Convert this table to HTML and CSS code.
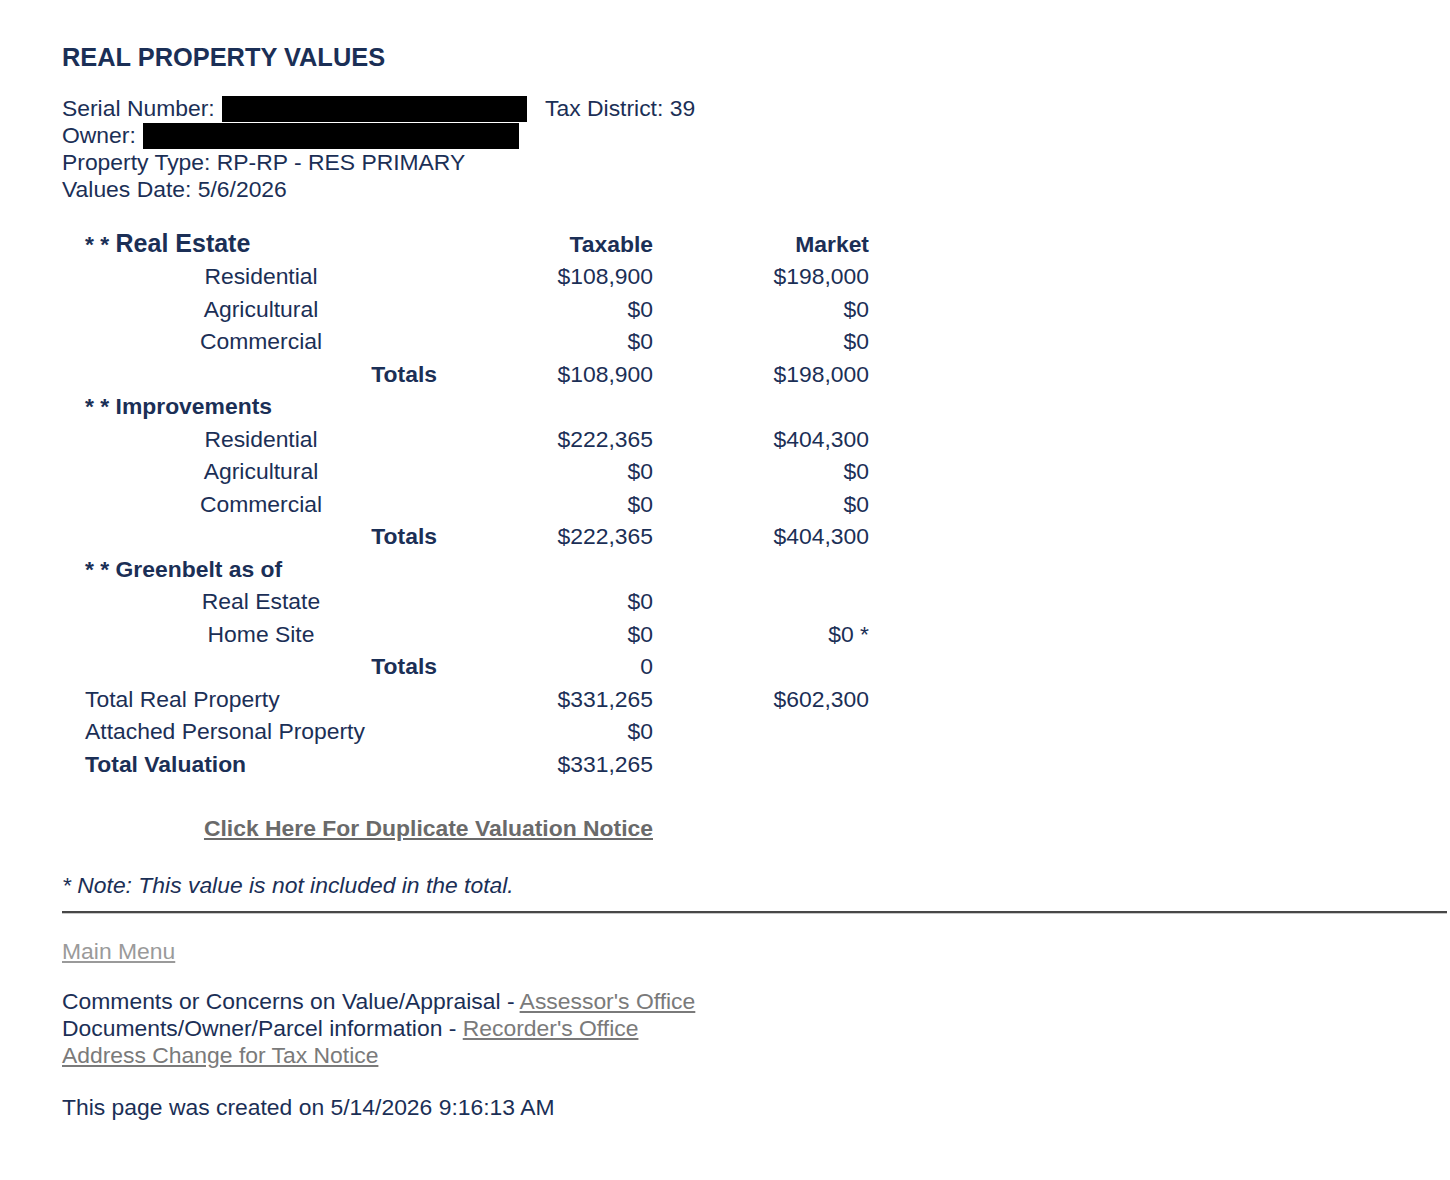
FILE: index.html
```html
<!DOCTYPE html>
<html lang="en">
<head>
<meta charset="utf-8">
<title>Real Property Values</title>
<link rel="stylesheet" href="styles.css">
</head>
<body>
<main class="page">
  <h1 class="title">REAL PROPERTY VALUES</h1>

  <div class="info">
    <div class="info-row">Serial Number: <span class="redact redact-serial"></span><span class="district">Tax District: 39</span></div>
    <div class="info-row">Owner: <span class="redact redact-owner"></span></div>
    <div class="info-row">Property Type: RP-RP - RES PRIMARY</div>
    <div class="info-row">Values Date: 5/6/2026</div>
  </div>

  <div class="values">
    <div class="cell section">* * <span class="section-big">Real Estate</span></div>
    <div class="cell num head">Taxable</div>
    <div class="cell num head">Market</div>

    <div class="cell sub">Residential</div>
    <div class="cell num">$108,900</div>
    <div class="cell num">$198,000</div>

    <div class="cell sub">Agricultural</div>
    <div class="cell num">$0</div>
    <div class="cell num">$0</div>

    <div class="cell sub">Commercial</div>
    <div class="cell num">$0</div>
    <div class="cell num">$0</div>

    <div class="cell totals">Totals</div>
    <div class="cell num">$108,900</div>
    <div class="cell num">$198,000</div>

    <div class="cell section full">* * Improvements</div>

    <div class="cell sub">Residential</div>
    <div class="cell num">$222,365</div>
    <div class="cell num">$404,300</div>

    <div class="cell sub">Agricultural</div>
    <div class="cell num">$0</div>
    <div class="cell num">$0</div>

    <div class="cell sub">Commercial</div>
    <div class="cell num">$0</div>
    <div class="cell num">$0</div>

    <div class="cell totals">Totals</div>
    <div class="cell num">$222,365</div>
    <div class="cell num">$404,300</div>

    <div class="cell section full">* * Greenbelt as of</div>

    <div class="cell sub">Real Estate</div>
    <div class="cell num">$0</div>
    <div class="cell num"></div>

    <div class="cell sub">Home Site</div>
    <div class="cell num">$0</div>
    <div class="cell num">$0 *</div>

    <div class="cell totals">Totals</div>
    <div class="cell num">0</div>
    <div class="cell num"></div>

    <div class="cell">Total Real Property</div>
    <div class="cell num">$331,265</div>
    <div class="cell num">$602,300</div>

    <div class="cell">Attached Personal Property</div>
    <div class="cell num">$0</div>
    <div class="cell num"></div>

    <div class="cell strong">Total Valuation</div>
    <div class="cell num">$331,265</div>
    <div class="cell num"></div>
  </div>

  <div class="dup-row"><a class="dup-link" href="#">Click Here For Duplicate Valuation Notice</a></div>

  <p class="note">* Note: This value is not included in the total.</p>

  <hr class="rule">

  <a class="main-menu" href="#">Main Menu</a>

  <div class="contacts">
    <div>Comments or Concerns on Value/Appraisal - <a class="office-link" href="#">Assessor's Office</a></div>
    <div>Documents/Owner/Parcel information - <a class="office-link" href="#">Recorder's Office</a></div>
    <div><a class="office-link" href="#">Address Change for Tax Notice</a></div>
  </div>

  <p class="created">This page was created on 5/14/2026 9:16:13 AM</p>
</main>
</body>
</html>
```

FILE: styles.css
```css
html, body {
  margin: 0;
  padding: 0;
  background: #ffffff;
}

body {
  font-family: "Liberation Sans", Arial, Helvetica, sans-serif;
  color: #1b2f56;
  font-size: 22.9px;
}

.page {
  padding: 39px 3px 40px 62px;
}

.title {
  margin: 0;
  font-size: 25.4px;
  font-weight: bold;
  line-height: 36px;
  color: #1b2f56;
}

.info {
  margin-top: 20px;
  line-height: 27px;
}

.info-row {
  white-space: nowrap;
}

.redact {
  display: inline-block;
  background: #000;
  height: 26px;
  vertical-align: -6px;
}

.redact-serial {
  width: 305px;
  margin-left: 1px;
}

.redact-owner {
  width: 376px;
  margin-left: 1px;
}

.district {
  margin-left: 18px;
}

.values {
  display: grid;
  grid-template-columns: 352px 216px 216px;
  grid-auto-rows: 32.5px;
  align-items: center;
  margin-left: 23px;
  margin-top: 25px;
  width: 784px;
}

.cell {
  white-space: nowrap;
  line-height: 27px;
}

.num {
  text-align: right;
}

.head {
  font-weight: bold;
}

.section {
  font-weight: bold;
}

.section.full {
  grid-column: 1 / -1;
}

.section-big {
  font-size: 25px;
}

.sub {
  text-align: center;
}

.totals {
  text-align: right;
  font-weight: bold;
}

.strong {
  font-weight: bold;
}

.dup-row {
  margin-left: 23px;
  width: 568px;
  text-align: right;
  margin-top: 34px;
  line-height: 27px;
}

.dup-link {
  color: #6a6a6a;
  font-weight: bold;
  text-decoration: underline;
}

.note {
  margin: 30px 0 0 0;
  font-style: italic;
  line-height: 27px;
}

.rule {
  margin: 12px 0 0 0;
  border: 0;
  border-top: 2px solid #474747;
  border-bottom: 1px solid #c8c8c8;
  height: 0;
}

.main-menu {
  display: inline-block;
  margin-top: 24px;
  color: #9a9a9a;
  text-decoration: underline;
  line-height: 27px;
}

.contacts {
  margin-top: 23px;
  line-height: 27px;
}

.office-link {
  color: #7a7a7a;
  text-decoration: underline;
}

.created {
  margin: 25px 0 0 0;
  line-height: 27px;
}
```
